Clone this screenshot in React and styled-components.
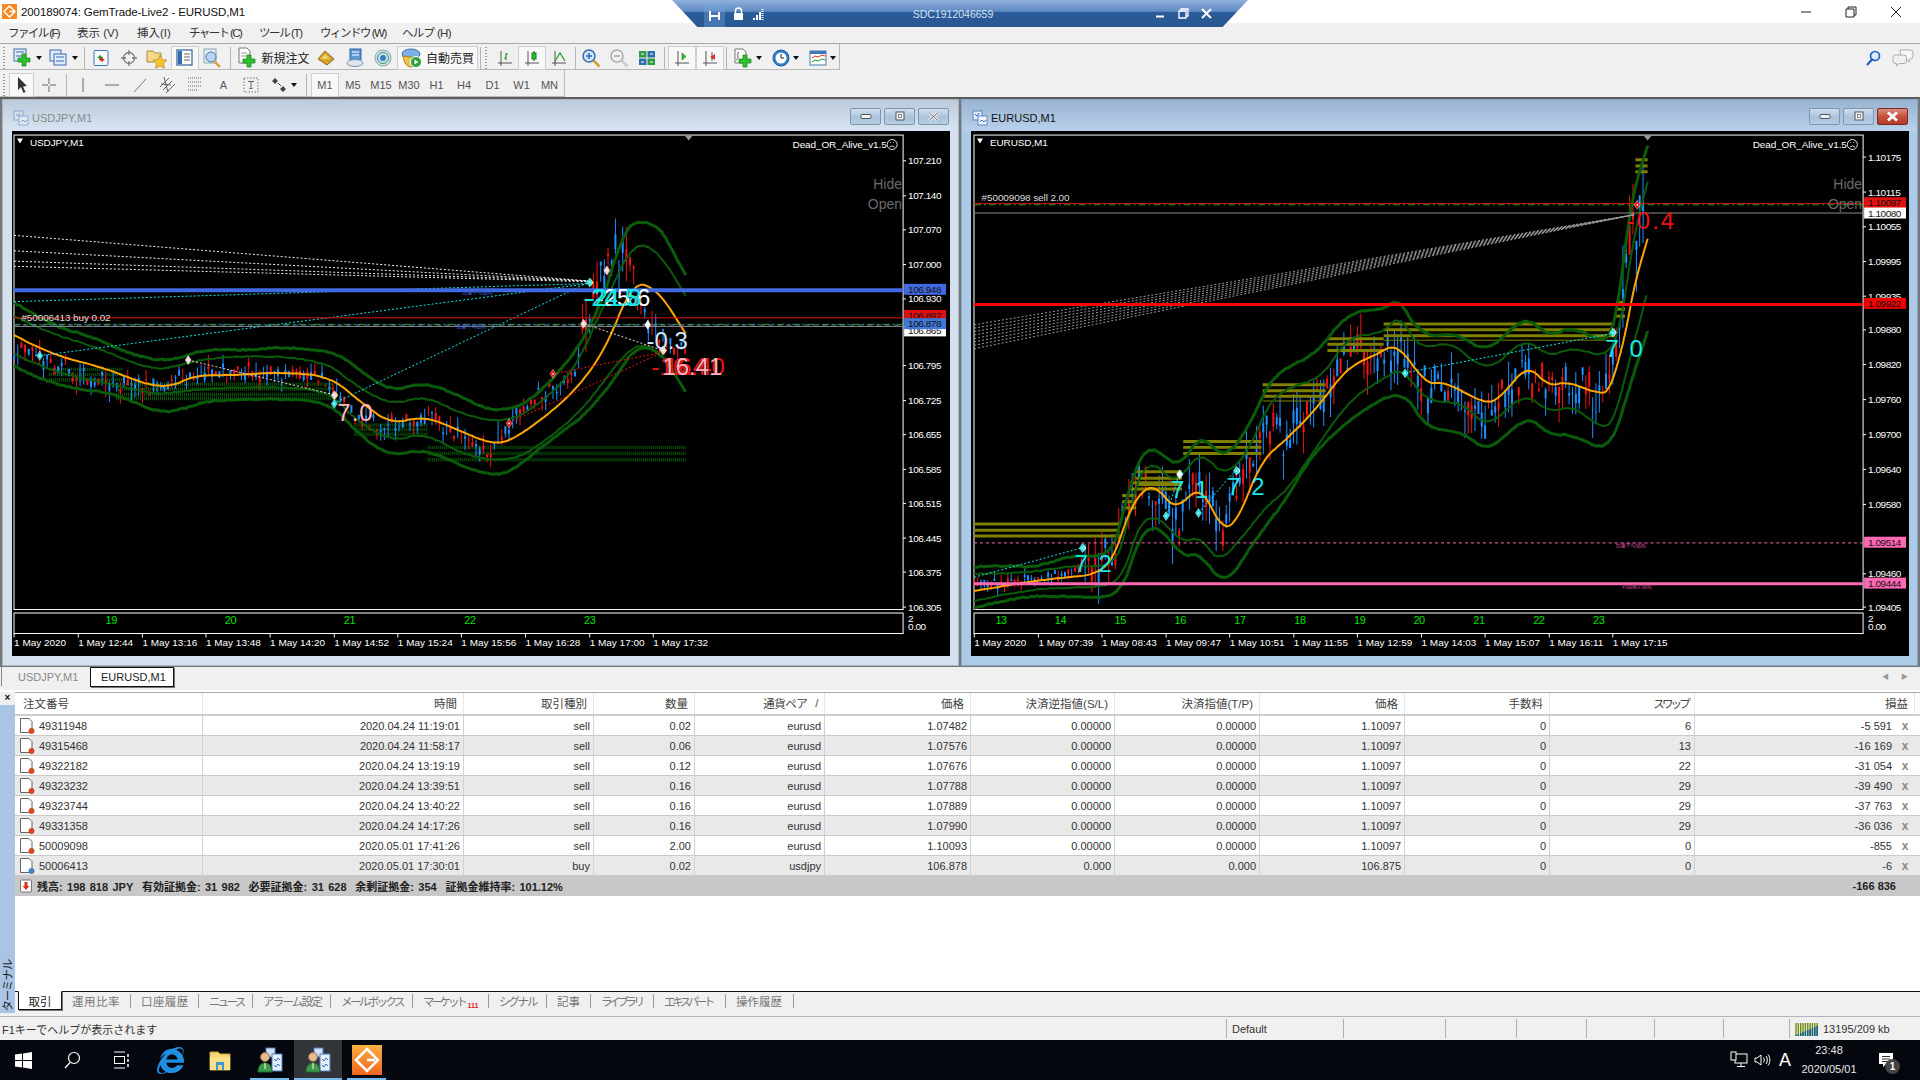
import React from 'react';
import styled, { createGlobalStyle, css } from 'styled-components';
import { FaInternetExplorer } from 'react-icons/fa';

const SANS = '"Liberation Sans","Noto Sans CJK JP",sans-serif';

const Global = createGlobalStyle`
  html, body { margin: 0; padding: 0; background: #f0f0f0; }
  body { font-family: ${SANS}; }
  * { box-sizing: border-box; }
`;

const Page = styled.div`
  position: relative; width: 1920px; height: 1080px; overflow: hidden;
  display: flex; flex-direction: column; background: #f0f0f0; color: #222; font-size: 12px;
`;

/* ---------- title bar ---------- */
const TitleBar = styled.div`
  height: 23px; flex: none; background: #fff; display: flex; align-items: center;
  justify-content: space-between; padding-left: 2px;
`;
const TitleLeft = styled.div`display: flex; align-items: center; gap: 4px; font-size: 11.5px; letter-spacing: -.1px; color: #111;`;
const WinCtrls = styled.div`display: flex; margin-right: 2px;`;
const WinCtrl = styled.div`width: 45px; height: 21px; display: flex; align-items: center; justify-content: center;`;

const ConnBar = styled.div`
  position: absolute; left: 672px; top: 0; width: 576px; height: 27px; color: #e8eef6;
  background: linear-gradient(#8fb0dc 0%, #5f8bc2 42%, #2b5c9c 46%, #28588f 100%);
  clip-path: polygon(0 0, 100% 0, 95.6% 100%, 4.4% 100%);
  display: flex; align-items: center; padding: 0 36px 0 32px; justify-content: space-between;
`;
const ConnGroup = styled.div`display: flex; align-items: center; gap: ${p => p.$gap || 4}px;`;
const ConnPin = styled.div`
  width: 21px; height: 22px; margin-top: 4px; background: rgba(120,170,225,.35); display: flex; align-items: center; justify-content: center;
`;
const ConnName = styled.div`font-size: 10.5px; color: #d5e0ee; margin-left: -14px;`;

/* ---------- menu ---------- */
const MenuBar = styled.div`
  height: 21px; flex: none; display: flex; align-items: center; padding: 0 0 3px 8px;
  background: #f0f0f0; border-bottom: 1px solid #a8a8a8; font-size: 11.5px; color: #333;
`;
const MenuItem = styled.div`width: ${p => p.$w}px; white-space: nowrap; letter-spacing: ${p => p.$ls || 0}px;`;

/* ---------- toolbars ---------- */
const ToolRow = styled.div`
  height: ${p => p.$h}px; flex: none; display: flex; align-items: stretch; justify-content: space-between;
  padding-right: 6px;
`;
const ToolBox = styled.div`
  display: flex; width: ${p => p.$w}px; align-items: center; padding-top: ${p => p.$pt}px;
  border-right: 1px solid #b8b8b8; border-bottom: 1px solid #b8b8b8;
`;
const Slot = styled.div`
  width: ${p => p.$w}px; height: 24px; flex: none; display: flex; align-items: center; justify-content: center; gap: 3px;
  font-size: 11px; color: #555; white-space: nowrap;
  ${p => p.$on && css`background: #f8f8f8; outline: 1px solid #cfcfcf; outline-offset: -1px;`}
  ${p => p.$black && css`color: #222; font-size: 12px;`}
`;
const Grip = styled.div`
  width: 8px; height: 22px; flex: none; margin-left: 1px;
  background: repeating-linear-gradient(#9a9a9a 0 1px, transparent 1px 3px) 2px 0 / 2px 100% no-repeat;
`;
const Sep = styled.div`
  width: ${p => p.$w}px; height: 22px; flex: none; position: relative;
  background: linear-gradient(#b4b4b4, #b4b4b4) center / 1px 100% no-repeat;
`;
const Drop = styled.span`width: 0; height: 0; border: 3px solid transparent; border-top: 4px solid #111; border-bottom: 0;`;
const RightTools = styled.div`display: flex; align-items: center; gap: 10px; padding-top: 2px;`;

/* ---------- MDI ---------- */
const Mdi = styled.div`
  height: 570px; flex: none; display: flex; border-top: 2px solid #5d5d5d; background: #777; gap: 2px; padding: 0 2px 1px 2px;
`;
const Win = styled.div`
  flex: 1; display: flex; flex-direction: column; min-width: 0;
  background: ${p => p.$active ? '#abcbe6' : '#d4e0ee'}; border: 1px solid ${p => p.$active ? '#87a7c6' : '#aab6c2'};
  padding: 0 8px 9px 9px;
`;
const WinHead = styled.div`
  height: 31px; flex: none; margin: 0 -8px 0 -9px; padding: 4px 9px 0 10px; display: flex; align-items: center; justify-content: space-between;
  background: ${p => p.$active ? 'linear-gradient(#99b4d1,#b9d1ea)' : 'linear-gradient(#bccbdb,#d7e4f2)'};
  color: ${p => p.$active ? '#111' : '#8b8b8b'}; font-size: 11px;
`;
const WinName = styled.div`display: flex; align-items: center; gap: 3px;`;
const WinBtns = styled.div`display: flex; gap: 3px; margin-bottom: 3px;`;
const WinBtn = styled.div`
  width: 31px; height: 17px; border-radius: 2px; display: flex; align-items: center; justify-content: center;
  border: 1px solid ${p => p.$close ? '#7d2a22' : '#7f96ad'};
  background: ${p => p.$close ? 'linear-gradient(#d98d7f 0%,#c7503c 50%,#b23b28 100%)' : 'linear-gradient(#cfdfee 0%,#a9c2db 55%,#b7cee4 100%)'};
`;
const BlackArea = styled.div`flex: 1; background: #000; min-height: 0; display: flex;`;
const ChartSvg = styled.svg`display: block; width: 940px; height: 524px;`;

const PriceT = styled.text`font: 10px ${SANS}; letter-spacing: -.45px; fill: ${p => p.$fill || '#fff'};`;
const TimeT = styled.text`font: 10px ${SANS}; fill: #fff;`;
const DayT = styled.text`font: 11px ${SANS}; fill: #00e000; letter-spacing: -.4px;`;
const SmallT = styled.text`font: 10px ${SANS}; letter-spacing: -.1px; fill: ${p => p.$fill || '#fff'};`;
const SideT = styled.text`font: 14px ${SANS}; fill: #6a6a6a; text-anchor: end;`;
const BigT = styled.text`font: 24px ${SANS}; fill: ${p => p.$fill}; letter-spacing: ${p => p.$ls || 0}px;`;
const TinyT = styled.text`font: 5px "Noto Sans CJK JP",sans-serif; fill: ${p => p.$fill};`;

/* ---------- chart tabs ---------- */
const ChartTabs = styled.div`
  height: 25px; flex: none; display: flex; align-items: flex-start; justify-content: space-between; padding-left: 1px;
  background: #f0f0f0; border-bottom: 2px solid #fff;
`;
const TabGroup = styled.div`display: flex; align-items: flex-start;`;
const ChartTab = styled.div`
  height: ${p => p.$on ? 20 : 19}px; width: ${p => p.$w}px; display: flex; align-items: center; padding-left: ${p => p.$on ? 10 : 16}px; font-size: 11px;
  ${p => p.$on ? css`background: #fff; color: #222; border: 1px solid #111; box-shadow: 1px 1px 0 #777;` : css`color: #8a8a8a; border-left: 1px solid #888;`}
`;
const Arrows = styled.div`display: flex; gap: 12px; color: #999; font-size: 7px; margin: 4px 12px 0 0;`;

/* ---------- terminal ---------- */
const Terminal = styled.div`height: 321px; flex: none; display: flex; background: #fff;`;
const Strip = styled.div`width: 15px; flex: none; display: flex; flex-direction: column; background: #f0f0f0;`;
const StripClose = styled.div`height: 13px; font-size: 10px; font-weight: 700; text-align: center; line-height: 11px; color: #111;`;
const StripBody = styled.div`
  flex: 1; background: #a9c4e4; display: flex; align-items: flex-end; justify-content: center; padding-bottom: 2px;
`;
const StripText = styled.div`
  writing-mode: vertical-rl; text-orientation: sideways; transform: rotate(180deg); font-size: 11.5px; color: #222; line-height: 14px; letter-spacing: -1.2px;
`;
const TermBody = styled.div`flex: 1; display: flex; flex-direction: column; min-width: 0;`;
const COLS = '188px 261px 130px 101px 130px 146px 144px 145px 145px 145px 145px 220px';
const HeadRow = styled.div`
  display: grid; grid-template-columns: ${COLS}; height: 24px; border-top: 1px solid #a8a8a8; border-bottom: 2px solid #cfcfcf; background: #fff;
`;
const HeadCell = styled.div`
  display: flex; align-items: center; justify-content: ${p => p.$left ? 'flex-start' : 'flex-end'}; padding: 0 6px 2px 8px; font-size: 11.5px; color: #444;
  border-right: 1px solid #e9e9e9; white-space: nowrap; gap: 8px; letter-spacing: ${p => p.$ls || 0}px;
`;
const Row = styled.div`
  display: grid; grid-template-columns: ${COLS}; height: 20px; border-bottom: 1px solid #c9c9c9; background: ${p => p.$alt ? '#e9e9e9' : '#fff'};
`;
const Cell = styled.div`
  display: flex; align-items: center; justify-content: flex-end; padding-right: 3px; font-size: 11px; color: #333; border-right: 1px solid #d2d2d2; white-space: nowrap;
`;
const IdCell = styled(Cell)`justify-content: flex-start; padding: 0 0 0 4px; gap: 3px;`;
const ProfitCell = styled(Cell)`border-right: 0; padding-right: 5px; gap: 8px;`;
const CloseX = styled.span`width: 10px; font-size: 12px; color: #8a8a8a; font-weight: 700; text-align: center;`;
const TotalRow = styled.div`
  height: 20px; background: #c8c8c8; display: flex; align-items: center; justify-content: space-between; padding: 0 24px 0 4px;
  font-size: 11px; font-weight: 700; color: #222; white-space: nowrap;
`;
const TotalLeft = styled.div`display: flex; align-items: center; gap: 4px; word-spacing: 1.3px;`;
const Filler = styled.div`flex: 1;`;
const BottomTabs = styled.div`
  height: 22px; flex: none; display: flex; align-items: flex-start; border-top: 1px solid #111; background: #f0f0f0; padding-left: 3px; font-size: 11.5px; color: #777;
`;
const BottomTab = styled.div`
  width: ${p => p.$w}px; height: 19px; display: flex; align-items: center; white-space: nowrap; letter-spacing: ${p => p.$ls || 0}px;
  ${p => p.$on ? css`justify-content: center; background: #fff; color: #222; border: 1px solid #111; border-top-color: #fff; box-shadow: 1px 1px 0 #777; margin-top: -1px;`
    : css`padding-left: 10px; border-right: 1px solid #999; height: 14px; margin-top: 2px;`}
`;
const Market = styled.sup`font-size: 7px; color: #e02020; margin: 0 0 -9px 3px; line-height: 1; font-weight: 700; letter-spacing: 0;`;

const Gutter = styled.div`height: 4px; flex: none; background: #f0f0f0; border-bottom: 1px solid #b4b4b4;`;
const Status = styled.div`height: 23px; flex: none; display: flex; align-items: center; font-size: 11px; color: #333; background: #f0f0f0;`;
const StatusCell = styled.div`
  width: ${p => p.$w}px; height: 19px; flex: none; display: flex; align-items: center; gap: 4px; padding-left: ${p => p.$pl || 0}px; white-space: nowrap;
  ${p => !p.$first && css`border-left: 1px solid #b0b0b0;`}
`;

/* ---------- taskbar ---------- */
const Taskbar = styled.div`height: 40px; flex: none; display: flex; justify-content: space-between; background: #05070e;`;
const TaskLeft = styled.div`display: flex;`;
const TaskSlot = styled.div`
  width: ${p => p.$w || 49}px; height: 40px; position: relative; display: flex; align-items: center; justify-content: center; color: #fff;
  ${p => p.$active && css`background: #333437;`}
  ${p => p.$open && css`&::after { content: ''; position: absolute; left: ${p.$active ? 0 : 5}px; right: ${p.$active ? 0 : 5}px; bottom: 0; height: 2px; background: #76b9ed; }`}
`;
const Tray = styled.div`display: flex; align-items: center; color: #fff; padding-right: 20px;`;
const TrayIcon = styled.div`width: ${p => p.$w}px; display: flex; justify-content: center; font-size: ${p => p.$fs || 12}px;`;
const Clock = styled.div`width: 66px; text-align: center; font-size: 11px; line-height: 19px; color: #e8e8e8;`;
const Notif = styled.div`position: relative; width: 28px; margin-left: 10px; display: flex; justify-content: center;`;
const NotifBadge = styled.span`
  position: absolute; right: 0; bottom: -6px; width: 15px; height: 15px; border-radius: 50%; background: #444; color: #fff;
  font-size: 10px; font-weight: 700; text-align: center; line-height: 15px;
`;

/* ---------- icons ---------- */
const S = ({ s = 18, vb = '0 0 18 18', children }) => <svg width={s} height={s} viewBox={vb}>{children}</svg>;
const Plus = ({ x = 0, y = 0 }) => <path transform={`translate(${x} ${y})`} d="M9 7h4v4h4v4h-4v4H9v-4H5v-4h4z" fill="#2fc02f" stroke="#178017" strokeWidth=".7" />;
const Chartlet = ({ x = 1, y = 1, w = 11, h = 12 }) => <g><rect x={x} y={y} width={w} height={h} fill="#dfeafa" stroke="#3a6ea8" /><path d={`M${x + 2} ${y + 3}h${w - 4}M${x + 2} ${y + 7}h${w - 4}`} stroke="#3a6ea8" /></g>;
const Icons = {
  newChart: <S s={20} vb="0 0 20 20"><Chartlet w={12} h={12} /><Plus x={0} y={-1} /></S>,
  profile: <S s={20} vb="0 0 20 20"><rect x="1" y="2" width="11" height="11" fill="#dfeafa" stroke="#3a6ea8" /><rect x="5" y="6" width="12" height="11" fill="#dfeafa" stroke="#3a6ea8" /><path d="M7 9h8M7 13h8" stroke="#3a6ea8" /></S>,
  market: <S><rect x="2" y="1.500" width="14" height="15" rx="1" fill="#f5f9ff" stroke="#3a78b8" /><path d="M6 5l3 3H7v2H5V8H3z" transform="translate(2 1)" fill="#1f9e2f" /><path d="M10 13l-3-3h2V8h2v2h2z" fill="#d8331f" /></S>,
  nav: <S><circle cx="9" cy="9" r="5.500" fill="none" stroke="#777" strokeWidth="1.300" /><path d="M9 1v5M9 12v5M1 9h5M12 9h5" stroke="#777" strokeWidth="1.300" /></S>,
  fav: <S s={22} vb="0 0 22 22"><path d="M1 4h6l2 2h6v9H1z" fill="#f4d98a" stroke="#a88a3a" /><path d="M14 8l2.200 4.500 4.800.7-3.500 3.300.9 4.800-4.400-2.300-4.400 2.300.9-4.800L7 13.200l4.800-.7z" fill="#f5c62e" stroke="#b08a15" strokeWidth=".7" /></S>,
  term: <S s={20} vb="0 0 20 20"><rect x="2" y="2" width="15" height="15" fill="#fff" stroke="#2d5f96" strokeWidth="1.200" /><rect x="3" y="3" width="4" height="13" fill="#2f6cb0" /><path d="M9 6h6M9 9h6M9 12h6" stroke="#666" /></S>,
  strat: <S s={20} vb="0 0 20 20"><rect x="2" y="1" width="12" height="14" fill="#e4ecf6" stroke="#8aa" /><circle cx="9" cy="9" r="5" fill="#b8d4f2" stroke="#4477aa" /><path d="M12 13l6 6" stroke="#d8a030" strokeWidth="2.400" /></S>,
  order: <S s={22} vb="0 0 22 22"><path d="M3 1h8l3 3v12H3z" fill="#fff" stroke="#777" /><path d="M5 6h6M5 9h6" stroke="#999" /><Plus x={2} y={1} /></S>,
  gold: <S s={20} vb="0 0 20 20"><path d="M2 11l7-8 9 8-7 6z" fill="#d8a228" stroke="#8a6a1a" /><path d="M5 11l4-5 5 5" fill="#f0cf70" /></S>,
  cloud: <S s={20} vb="0 0 20 20"><rect x="5" y="1" width="11" height="11" fill="#5c98d8" stroke="#2f669f" /><path d="M7 4h7M7 7h7" stroke="#fff" /><ellipse cx="10" cy="15" rx="8" ry="3.500" fill="#dde6ef" stroke="#7d93a8" /></S>,
  signal: <S s={20} vb="0 0 20 20"><circle cx="10" cy="10" r="8" fill="#cde0e8" stroke="#88a8b8" /><circle cx="10" cy="10" r="5.500" fill="none" stroke="#3d9a6a" /><circle cx="10" cy="10" r="3" fill="#3d7ac8" /></S>,
  auto: <S s={22} vb="0 0 22 22"><ellipse cx="10" cy="7" rx="9" ry="5" fill="#7ab2e8" stroke="#3f6fa0" /><path d="M2 9c1 7 4 11 8 11s6-4 7-9z" fill="#f0c24a" stroke="#a37e18" /><circle cx="15" cy="15" r="5.500" fill="#27a33a" stroke="#fff" /><path d="M13.500 12.500l4 2.500-4 2.500z" fill="#fff" /></S>,
  ctBar: <S><path d="M5 2v12h11" fill="none" stroke="#555" /><path d="M2 14h3M5 14v3" stroke="#555" /><path d="M10 4v7M10 5h2M8 9h2" stroke="#1f9e2f" strokeWidth="1.200" /></S>,
  ctCandle: <S><path d="M5 2v12h11M2 14h3M5 14v3" fill="none" stroke="#555" /><path d="M11 2v10" stroke="#333" /><rect x="9" y="4" width="4" height="6" fill="#2fc02f" stroke="#1a7a1a" /></S>,
  ctLine: <S><path d="M5 2v12h11M2 14h3M5 14v3" fill="none" stroke="#555" /><path d="M5 12l5-8 5 8" fill="none" stroke="#1f9e2f" strokeWidth="1.200" /></S>,
  zin: <S s={20} vb="0 0 20 20"><circle cx="8" cy="8" r="6" fill="#cfe4fb" stroke="#2f6cb0" strokeWidth="1.500" /><path d="M5 8h6M8 5v6" stroke="#2f6cb0" strokeWidth="1.600" /><path d="M12.500 12.500l6 6" stroke="#d8a030" strokeWidth="2.600" /></S>,
  zout: <S s={20} vb="0 0 20 20"><circle cx="8" cy="8" r="6" fill="#f2f2f2" stroke="#aaa" strokeWidth="1.500" /><path d="M5 8h6" stroke="#aaa" strokeWidth="1.600" /><path d="M12.500 12.500l6 6" stroke="#ccc" strokeWidth="2.600" /></S>,
  tile: <S><rect x="1" y="2" width="7.500" height="6.500" fill="#2f9a40" /><rect x="9.500" y="2" width="7.500" height="6.500" fill="#2f6cb0" /><rect x="1" y="9.500" width="7.500" height="6.500" fill="#2f6cb0" /><rect x="9.500" y="9.500" width="7.500" height="6.500" fill="#2f9a40" /><path d="M3 5h3M12 5h3M3 13h3M12 13h3" stroke="#fff" /></S>,
  scroll: <S><path d="M5 2v12h11M2 14h3M5 14v3" fill="none" stroke="#555" /><path d="M9 4l4 3.500-4 3.500z" fill="#2fc02f" stroke="#1a7a1a" strokeWidth=".6" /></S>,
  shift: <S><path d="M5 2v12h11M2 14h3M5 14v3M11 3v9" fill="none" stroke="#555" /><path d="M14 5l-5 3 5 3z" fill="#d8331f" /></S>,
  ind: <S s={20} vb="0 0 20 20"><path d="M2 1h8l3 3v11H2z" fill="#fff" stroke="#777" /><path d="M6 4c-2 0-1 3-1 5s-1 3-2 3" fill="none" stroke="#555" /><Plus x={1} y={0} /></S>,
  clock: <S><circle cx="9" cy="9" r="8" fill="#2f80d0" stroke="#1f5a98" /><circle cx="9" cy="9" r="5.500" fill="#fff" /><path d="M9 5v4h3" stroke="#222" fill="none" /></S>,
  tmpl: <S><rect x="1" y="2" width="16" height="14" fill="#fff" stroke="#4a7aa8" /><rect x="1" y="2" width="16" height="3" fill="#3f78b8" /><path d="M3 9l3-2 3 1 4-2 3 1" stroke="#d8331f" fill="none" /><path d="M3 13l3-2 3 1 4-2 3 1" stroke="#1f9e2f" fill="none" /></S>,
  cursor: <S><path d="M5 1l9 9-4 .4 2.500 5.600-2 .9L8 11l-3 3z" fill="#333" /></S>,
  cross: <S><path d="M9 2v6M9 10v6M2 9h6M10 9h6" stroke="#666" /></S>,
  vline: <S><path d="M9 2v14" stroke="#666" /></S>,
  hline: <S><path d="M2 9h14" stroke="#666" /></S>,
  trend: <S><path d="M3 16L15 3" stroke="#777" /></S>,
  chan: <S s={20} vb="0 0 20 20"><path d="M2 12l9-9M5 15l9-9M8 18l9-9M6 2l4 15M3 9l10 1" stroke="#666" fill="none" /></S>,
  fib: <S s={20} vb="0 0 20 20"><path d="M2 3h14M2 7h14M2 11h14M2 15h10" stroke="#666" strokeDasharray="1 1" /></S>,
  txtbox: <S><rect x="2" y="2" width="14" height="14" fill="none" stroke="#777" strokeDasharray="1.500 1.500" /><path d="M6 5.500h6M9 5.500v7M7.500 12.500h3" stroke="#666" fill="none" /></S>,
  arrows: <S><path d="M5 2l3 3-3 3-3-3zM13 10l3 3-3 3-3-3z" fill="#444" /><path d="M8 7l3 3" stroke="#444" /></S>,
  pin: <S s={14} vb="0 0 14 14"><path d="M1 7h11M2 2v10M11 3v8" stroke="#fff" strokeWidth="2" /></S>,
  lock: <S s={13} vb="0 0 13 13"><path d="M3.500 6V4a3 3 0 0 1 6 0v2" fill="none" stroke="#fff" strokeWidth="1.500" /><rect x="2" y="6" width="9" height="7" fill="#fff" /></S>,
  bars: <S s={13} vb="0 0 13 13"><path d="M1 13v-2h2v2zM4 13V8h2v5zM7 13V5h2v8z" fill="#fff" /><path d="M10.500 13V1" stroke="#fff" strokeDasharray="1 1" strokeWidth="2" /></S>,
  search: <S s={18} vb="0 0 18 18"><circle cx="11" cy="7" r="4.500" fill="#dbeafe" stroke="#1d5fc0" strokeWidth="1.700" /><path d="M8 10.500l-5 5.500" stroke="#1d5fc0" strokeWidth="2.200" /></S>,
  chat: <S s={22} vb="0 0 22 22"><path d="M8 3h10a3 3 0 0 1 3 3v3a3 3 0 0 1-3 3l-1 3-2-3H9z" fill="#f7f7f7" stroke="#aaa" /><path d="M3 8h9a2.500 2.500 0 0 1 2.500 2.500V14a2.500 2.500 0 0 1-2.500 2.500H7L4.500 19v-2.500H3A2.500 2.500 0 0 1 1 14v-3.500A2.500 2.500 0 0 1 3 8z" fill="#f0f0f0" stroke="#aaa" /></S>,
  winTab: <S s={16} vb="0 0 16 16"><rect x="1" y="1" width="9" height="9" fill="#dfeafa" stroke="#5a8ac8" /><rect x="6" y="6" width="9" height="9" fill="#eef4fc" stroke="#5a8ac8" /><path d="M3 4l2 2 2-3M8 12l2-2 2 2 2-2" stroke="#3a6ea8" fill="none" /></S>,
  winTabDim: <S s={16} vb="0 0 16 16"><g opacity=".55"><rect x="1" y="1" width="9" height="9" fill="#dfeafa" stroke="#5a8ac8" /><rect x="6" y="6" width="9" height="9" fill="#eef4fc" stroke="#5a8ac8" /><path d="M3 4l2 2 2-3M8 12l2-2 2 2 2-2" stroke="#3a6ea8" fill="none" /></g></S>,
  start: <S s={17} vb="0 0 17 17"><path d="M0 2.500l7-1v6.500H0zM8 1.400L17 0v8H8zM0 9h7v6.500l-7-1zM8 9h9v8l-9-1.400z" fill="#fff" /></S>,
  lens: <S s={20} vb="0 0 20 20"><circle cx="12" cy="8" r="5.500" fill="none" stroke="#fff" strokeWidth="1.200" /><path d="M8 12.500L3 18" stroke="#fff" strokeWidth="1.200" /></S>,
  taskv: <S s={18} vb="0 0 18 18"><path d="M2 1h11M2 17h11" stroke="#fff" /><rect x="2.500" y="5.500" width="10" height="7" fill="none" stroke="#fff" /><path d="M16 3v3M16 8v3M16 13v3" stroke="#fff" strokeWidth="1.500" /></S>,
  folder: <S s={26} vb="0 0 26 26"><path d="M3 5h8l2 2h10v16H3z" fill="#f7d774" stroke="#c8a43a" /><rect x="3" y="10" width="20" height="13" fill="#fbe08a" /><rect x="9" y="15" width="8" height="8" fill="#3a9ad8" /><rect x="11" y="18" width="4" height="5" fill="#f7d774" /></S>,
  mt: <S s={28} vb="0 0 28 28"><rect x="10" y="2" width="9" height="9" fill="#cfe0f6" stroke="#4a7fc0" /><rect x="16" y="8" width="10" height="17" fill="#e4eefb" stroke="#4a7fc0" /><path d="M18 13l2 2 2-3 2 2M18 19l2 2 2-3 2 2" stroke="#3a6ea8" fill="none" /><circle cx="9" cy="11" r="4.500" fill="#e9b98e" stroke="#8a6a4a" /><path d="M2 26c0-6 3-9 7-9s7 3 7 9z" fill="#3f9a4a" stroke="#1f6a2a" /><path d="M9 17v6" stroke="#fff" /></S>,
  gem: <S s={30} vb="0 0 30 30"><defs><linearGradient id="gmg" x1="0" y1="0" x2="0" y2="1"><stop offset="0" stopColor="#fbb040" /><stop offset="1" stopColor="#f26522" /></linearGradient></defs><rect width="30" height="30" fill="url(#gmg)" /><path d="M15 4L26 15 15 26 4 15zM15 15h8" fill="none" stroke="#fff" strokeWidth="2.500" /></S>,
  gemSmall: <S s={15} vb="0 0 30 30"><rect width="30" height="30" fill="#f58a25" /><path d="M15 4L26 15 15 26 4 15zM15 15h8" fill="none" stroke="#fff" strokeWidth="3" /></S>,
  net: <S s={18} vb="0 0 18 18"><rect x="5" y="3" width="12" height="9" fill="none" stroke="#fff" /><path d="M11 12v3M7 15.500h8" stroke="#fff" /><rect x="1" y="1" width="5" height="8" fill="#05070e" stroke="#fff" /></S>,
  vol: <S s={18} vb="0 0 18 18"><path d="M2 7h2l4-3v10l-4-3H2z" fill="none" stroke="#fff" /><path d="M10.500 6.500c1 1.500 1 3.500 0 5M13 5c1.800 2.500 1.800 5.500 0 8M15 3.500c2.500 3.500 2.500 7.500 0 11" fill="none" stroke="#fff" /></S>,
  notify: <S s={16} vb="0 0 16 16"><path d="M1 1h14v11H8l-3 3v-3H1z" fill="#fff" /><path d="M4 4.500h8M4 7h8M4 9.500h6" stroke="#333" /></S>,
  doc: c => <S s={17} vb="0 0 17 17"><path d="M1.500 1.500h8.500l3 3v11h-11.500z" fill="#fff" stroke="#666" /><circle cx="12.500" cy="14" r="2.700" fill={c} stroke="#7a3a20" strokeWidth=".4" /></S>,
  sumDoc: <S s={14} vb="0 0 14 14"><rect x="1.500" y="1" width="11" height="12" rx="1" fill="#fff" stroke="#777" /><path d="M5.500 3h3v4h2L7 11 3.500 7h2z" fill="#d8331f" /></S>,
  meter: <S s={24} vb="0 0 24 14"><g strokeWidth="1.400">{[...Array(10)].map((_, i) => <g key={i}><path d={`M${1 + i * 2.350} 1v${13}`} stroke="#6f8a10" /><path d={`M${1 + i * 2.350} ${13 - i}v${1 + i}`} stroke="#0a5a88" /></g>)}</g></S>,
};

/* ---------- chart data ---------- */
const L = ([x, y]) => [x / 1.633 + 0, y / 2.904 + 130];
const R = ([x, y]) => [960 + x / 1.633, y / 2.904 + 130];
const quadSamples = (pts, m) => {
  const p = pts.map(m), out = [p[0]];
  let prev = p[0];
  for (let i = 1; i < p.length - 1; i++) {
    const e = [(p[i][0] + p[i + 1][0]) / 2, (p[i][1] + p[i + 1][1]) / 2];
    const n = Math.max(2, Math.ceil(Math.hypot(e[0] - prev[0], e[1] - prev[1]) / 3));
    for (let k = 1; k <= n; k++) {
      const t = k / n, u = 1 - t;
      out.push([u * u * prev[0] + 2 * u * t * p[i][0] + t * t * e[0], u * u * prev[1] + 2 * u * t * p[i][1] + t * t * e[1]]);
    }
    prev = e;
  }
  out.push(p[p.length - 1]);
  return out;
};
const rng = seed => () => { seed = (seed * 48271) % 2147483647; return seed / 2147483647; };
const wobbly = (pts, m, seed, amp) => {
  const r = rng(seed);
  for (let i = 0; i < 5; i++) r();
  return quadSamples(pts, m).map(([x, y]) => `${x.toFixed(1)},${(y + (r() - .5) * amp).toFixed(1)}`).join(' ');
};
const lerp = (pts, x) => {
  for (let i = 0; i < pts.length - 1; i++) if (x <= pts[i + 1][0]) {
    const t = (x - pts[i][0]) / (pts[i + 1][0] - pts[i][0]);
    return pts[i][1] + t * (pts[i + 1][1] - pts[i][1]);
  }
  return pts[pts.length - 1][1];
};

const candles = (price, x0, x1, step, amp, seed, regionAmp) => {
  const r = rng(seed), out = [];
  for (let i = 0; i < 9; i++) r();
  for (let x = x0; x < x1; x += step) {
    const a = regionAmp ? regionAmp(x, amp) : amp;
    const c = lerp(price, x) + (r() - .5) * a * 1.2;
    const up = r() * a, dn = r() * a;
    const body = r() * a * .6;
    const col = r() > .45 ? '#1e90ff' : '#f01414';
    out.push({ x, y1: c - up, y2: c + dn, b1: c - body / 2, b2: c + body / 2, col });
  }
  return out;
};

const leftChart = {
  id: 'USDJPY,M1', map: L, vb: '12 131 940 524', mark: 1127, frame: [14, 905], signature: 1297,
  bandsThick: [
    [[23, 500], [60, 540], [100, 575], [150, 600], [200, 640], [250, 668], [290, 665], [340, 635], [400, 640], [460, 630], [510, 638], [555, 650], [590, 700], [640, 760], [695, 732], [750, 770], [800, 815], [840, 810], [880, 770], [945, 640], [985, 500], [1010, 350], [1035, 257], [1080, 280], [1100, 350], [1122, 420]],
    [[23, 685], [80, 740], [190, 765], [260, 825], [310, 805], [340, 785], [460, 780], [540, 790], [590, 890], [640, 948], [695, 925], [780, 995], [830, 1005], [900, 900], [950, 840], [1000, 740], [1040, 625], [1080, 640], [1122, 760]],
  ],
  bandsThin: [
    [[23, 540], [80, 590], [150, 625], [250, 700], [300, 680], [350, 660], [460, 655], [540, 680], [580, 740], [640, 800], [695, 770], [760, 830], [830, 850], [880, 800], [940, 700], [990, 500], [1035, 327], [1075, 345], [1122, 480]],
    [[23, 650], [80, 700], [200, 745], [260, 770], [330, 750], [460, 745], [540, 760], [580, 840], [640, 905], [695, 880], [760, 945], [830, 965], [880, 920], [950, 820], [1000, 700], [1040, 620], [1075, 635], [1100, 700]],
  ],
  orange: [[23, 595], [80, 650], [170, 690], [240, 740], [280, 745], [320, 712], [380, 712], [460, 703], [540, 715], [590, 790], [640, 855], [695, 830], [760, 880], [800, 908], [830, 908], [880, 850], [940, 760], [990, 640], [1035, 440], [1075, 460], [1122, 590]],
  price: [[23, 640], [80, 680], [170, 720], [240, 750], [280, 730], [320, 712], [400, 700], [460, 705], [540, 730], [590, 850], [640, 860], [695, 830], [760, 900], [800, 935], [830, 860], [880, 770], [940, 720], [955, 560], [1000, 360], [1030, 370], [1040, 470], [1060, 570], [1085, 600], [1122, 640]],
  cArgs: [23, 1122, 6, 45, 123456789, x => x > 950 && x < 1040 ? 85 : x < 250 ? 45 : 38],
  lines: [
    { y: 465, c: '#4169e1', w: 4 }, { y: 545, c: '#e01010', w: 1 }, { y: 564, c: '#22a022', w: 1, dash: '7 3 2 3' }, { y: 566, c: '#5a78c8', w: 1, dash: '5 4' }, { y: 570, c: '#8a8a8a', w: 1 },
  ],
  dotted: [
    [[23, 305], [965, 438], '#f4f4f4'], [[23, 350], [965, 438], '#f4f4f4'], [[23, 380], [965, 438], '#f4f4f4'], [[23, 395], [965, 440], '#f4f4f4'],
    [[23, 498], [965, 445], '#19e6e6'], [[65, 655], [965, 445], '#19e6e6'], [[545, 795], [965, 440], '#19e6e6'],
    [[308, 668], [545, 768], '#f4d0d8'], [[955, 562], [1085, 640], '#f4d0d8'],
    [[833, 850], [1085, 645], '#e81414'], [[905, 708], [1085, 645], '#e81414'],
  ],
  hatch: [[80, 200, [695, 710, 725]], [190, 545, [738, 752, 768, 780]], [580, 700, [857, 870, 884]], [700, 1122, [922, 940, 958]]],
  gold: [],
  markers: [[65, 655, '#19e6e6'], [308, 668, '#f4d0d8'], [547, 770, '#f4d0d8', '#ffe000'], [547, 795, '#19e6e6'], [833, 852, '#e81414'], [905, 708, '#e81414'], [955, 562, '#f4d0d8'], [965, 442, '#19e6e6', '#ffe000'], [993, 407, '#f4d0d8'], [1060, 565, '#fff'], [1085, 640, '#f4d0d8', '#ffe000']],
  prices: [['107.210', 88], ['107.140', 190], ['107.070', 289], ['107.000', 390], ['106.930', 490], ['106.795', 684], ['106.725', 786], ['106.655', 885], ['106.585', 986], ['106.515', 1085], ['106.445', 1186], ['106.375', 1285], ['106.305', 1387]],
  tags: [['106.865', 583, '#fff', '#111'], ['106.948', 462, '#4169e1', '#111'], ['106.897', 538, '#e01010', '#111'], ['106.878', 562, '#3f78d8', '#111']],
  days: [['19', 182], ['20', 377], ['21', 572], ['22', 769], ['23', 965]],
  times: [['1 May 2020', 23], ['1 May 12:44', 128], ['1 May 13:16', 233], ['1 May 13:48', 337], ['1 May 14:20', 442], ['1 May 14:52', 547], ['1 May 15:24', 651], ['1 May 15:56', 755], ['1 May 16:28', 860], ['1 May 17:00', 965], ['1 May 17:32', 1069]],
  note: ['#50006413 buy 0.02', 35, 553],
  big: [
    ['7.0', 552, 845, '#ffb6c1', 1], ['-25.6', 975, 512, '#fff'], ['-24.5', 955, 512, '#19e6e6'], ['-21.8', 960, 512, '#19e6e6'], ['-0.3', 1058, 635, '#cfe8ff'],
    ['-16.4', 1066, 712, '#e81414'], ['16.40', 1088, 712, '#e81414'], ['16.41', 1084, 712, '#ffb6c1'],
  ],
  tiny: [['加重平均価格', 757, 477, '#3a5ac8'], ['加重平均価格', 747, 575, '#3a5ac8']],
  sideX: 1476,
};

const rightChart = {
  id: 'EURUSD,M1', map: R, vb: '969 131 940 524', mark: 1122, frame: [972, 1863], signature: 1294,
  bandsThick: [
    [[20, 1270], [60, 1265], [120, 1272], [180, 1235], [245, 1240], [265, 1100], [290, 950], [315, 920], [355, 985], [390, 880], [430, 960], [470, 860], [500, 740], [530, 690], [580, 650], [630, 530], [690, 520], [715, 488], [740, 570], [770, 600], [810, 590], [860, 650], [920, 535], [960, 600], [1000, 570], [1050, 620], [1070, 560], [1095, 200], [1122, 45]],
    [[20, 1390], [100, 1350], [200, 1360], [260, 1355], [290, 1180], [320, 1145], [360, 1240], [390, 1230], [430, 1330], [480, 1190], [530, 1075], [570, 950], [630, 845], [720, 745], [760, 870], [820, 875], [860, 940], [925, 825], [960, 885], [1000, 885], [1060, 940], [1095, 730], [1122, 585]],
  ],
  bandsThin: [
    [[20, 1290], [100, 1290], [180, 1265], [250, 1270], [270, 1150], [290, 1000], [315, 965], [350, 1030], [390, 930], [430, 1010], [470, 930], [500, 800], [530, 750], [590, 720], [630, 600], [690, 590], [715, 535], [750, 640], [800, 610], [860, 710], [920, 600], [960, 660], [1000, 630], [1050, 660], [1075, 600], [1100, 300], [1122, 150]],
    [[20, 1370], [100, 1335], [200, 1330], [260, 1320], [290, 1140], [320, 1120], [360, 1200], [390, 1180], [420, 1260], [460, 1180], [500, 1090], [530, 1050], [570, 950], [630, 790], [690, 720], [720, 690], [760, 790], [820, 790], [860, 870], [920, 760], [960, 820], [1000, 800], [1040, 860], [1065, 860], [1095, 650], [1120, 480]],
  ],
  orange: [[20, 1340], [100, 1315], [170, 1300], [210, 1295], [245, 1260], [275, 1100], [300, 1040], [320, 1040], [350, 1105], [390, 1030], [425, 1160], [450, 1140], [490, 960], [530, 900], [580, 810], [630, 690], [680, 650], [712, 618], [760, 740], [790, 730], [855, 795], [880, 780], [925, 680], [960, 745], [990, 730], [1040, 765], [1060, 760], [1085, 600], [1100, 450], [1122, 315]],
  price: [[20, 1320], [100, 1310], [170, 1290], [210, 1260], [245, 1240], [275, 1050], [300, 1030], [320, 1060], [350, 1150], [390, 1020], [425, 1180], [450, 1060], [490, 880], [530, 900], [580, 780], [630, 670], [680, 640], [712, 640], [760, 750], [790, 740], [855, 830], [880, 760], [925, 700], [960, 740], [990, 730], [1040, 770], [1060, 700], [1085, 480], [1100, 250], [1115, 270]],
  cArgs: [20, 1116, 5.5, 85, 987654321, (x, a) => x < 200 ? 25 : x > 1080 ? 150 : a],
  lines: [
    { y: 212, c: '#e01010', w: 1 }, { y: 216, c: '#22a022', w: 1, dash: '7 3 2 3' }, { y: 240, c: '#8a8a8a', w: 1 }, { y: 506, c: '#ff0000', w: 3 },
    { y: 1200, c: '#ff69b4', w: 1, dash: '3 3' }, { y: 1319, c: '#ff69b4', w: 3 },
  ],
  dotted: [
    ...[565, 575, 585, 595, 605, 615, 625, 635].map(y => [[20, y], [1100, 245], '#9a9a9a']),
    [[725, 705], [1065, 590], '#19e6e6'], [[20, 1300], [195, 1215], '#19e6e6'], [[335, 1120], [355, 1000], '#19e6e6'], [[387, 1113], [447, 990], '#19e6e6'],
  ],
  hatch: [],
  gold: [[20, 258, [1145, 1163, 1180]], [262, 285, [1062, 1080, 1098]], [275, 360, [1025, 1043]], [285, 360, [993, 1012, 1030]], [362, 490, [905, 922, 940]], [492, 595, [740, 757, 773, 787]], [598, 690, [606, 622, 640]], [690, 1068, [563, 580, 597, 610]], [1070, 1085, [500, 520, 540]], [1102, 1122, [85, 103, 120]]],
  markers: [[197, 1215, '#19e6e6', '#fff'], [334, 1122, '#19e6e6'], [356, 1000, '#fff', '#19e6e6'], [387, 1113, '#19e6e6'], [449, 990, '#19e6e6', '#fff'], [725, 706, '#19e6e6'], [1065, 588, '#19e6e6', '#fff'], [1105, 216, '#e81414']],
  prices: [['1.10175', 77], ['1.10115', 179], ['1.10055', 280], ['1.09995', 381], ['1.09935', 482], ['1.09880', 580], ['1.09820', 681], ['1.09760', 783], ['1.09700', 885], ['1.09640', 986], ['1.09580', 1088], ['1.09460', 1290], ['1.09405', 1387]],
  tags: [['1.10097', 210, '#e01010', '#111'], ['1.10080', 240, '#fff', '#111'], ['1.09922', 503, '#f00000', '#111'], ['1.09514', 1198, '#ff69b4', '#111'], ['1.09444', 1317, '#ff69b4', '#111']],
  days: ['13', '14', '15', '16', '17', '18', '19', '20', '21', '22', '23'].map((d, i) => [d, [64, 161, 259, 357, 455, 553, 651, 748, 846, 944, 1042][i]]),
  times: [['1 May 2020', 20], ['1 May 07:39', 125], ['1 May 08:43', 229], ['1 May 09:47', 334], ['1 May 10:51', 438], ['1 May 11:55', 543], ['1 May 12:59', 647], ['1 May 14:03', 752], ['1 May 15:07', 856], ['1 May 16:11', 961], ['1 May 17:15', 1065]],
  note: ['#50009098 sell 2.00', 32, 204],
  big: [
    ['7 2', 184, 1285, '#19e6e6', 2], ['7 1', 342, 1068, '#19e6e6', 2], ['7 2', 434, 1062, '#19e6e6', 2], ['7 0', 1053, 658, '#19e6e6', 2], ['-0.4', 1088, 287, '#e81414', 2],
  ],
  tiny: [['加重平均価格', 1070, 1212, '#c04a90'], ['利益確定価格', 1080, 1332, '#c04a90']],
  sideX: 1473,
};

const Marker = ({ p, c, c2 }) => {
  const [x, y] = p;
  return <g>
    {c2 && <path d={`M${x + 1} ${y - 4}l3 4-3 4z`} fill={c2} />}
    <path d={`M${x} ${y - 4.500}l3 4.500-3 4.500-3-4.500z`} fill={c} stroke="#fff" strokeWidth=".4" />
    <circle cx={x} cy={y} r=".9" fill="#fff" />
  </g>;
};

const Chart = ({ d }) => {
  const m = d.map;
  const [xL, xR] = d.frame;
  const yOf = y => y / 2.904 + 130;
  const cs = candles(d.price, ...d.cArgs);
  const smile = m([d.signature + 163, 0])[0];
  return (
    <ChartSvg viewBox={d.vb}>
      <rect x={xL} y="134.500" width={xR - xL} height="475.500" fill="none" stroke="#fff" />
      <rect x={xL} y="613.500" width={xR - xL} height="20.500" fill="none" stroke="#fff" />
      {d.hatch.map(([a, b, ys], i) => ys.map(y => <path key={`${i}-${y}`} d={`M${m([a, y])[0]} ${yOf(y)}H${m([b, y])[0]}`} stroke="#0a5c0a" strokeWidth="3.500" strokeDasharray="1 1" />))}
      {cs.map((c, i) => {
        const x = m([c.x, 0])[0].toFixed(1);
        return <g key={i} stroke={c.col}>
          <path d={`M${x} ${yOf(c.y1).toFixed(1)}V${yOf(c.y2).toFixed(1)}`} strokeWidth="1" />
          <path d={`M${x} ${yOf(c.b1).toFixed(1)}V${yOf(c.b2).toFixed(1)}`} strokeWidth="2" />
        </g>;
      })}
      {d.gold.map(([a, b, ys], i) => ys.map((y, j) => <path key={`${i}-${j}`} d={`M${m([a, y])[0]} ${yOf(y)}H${m([b, y])[0]}`} stroke="#808000" strokeWidth={j === 3 ? 1 : 3} />))}
      {d.bandsThick.map((b, i) => <polyline key={i} points={wobbly(b, m, 1000 + i * 37, 1.2)} fill="none" stroke="#0a5c0a" strokeWidth="3" />)}
      {d.bandsThin.map((b, i) => <polyline key={i} points={wobbly(b, m, 2000 + i * 53, 1)} fill="none" stroke="#0a5c0a" strokeWidth="2" />)}
      <polyline points={wobbly(d.orange, m, 3003, .4)} fill="none" stroke="#ffa500" strokeWidth="2" />
      {d.dotted.map(([a, b, c], i) => { const A = m(a), B = m(b); return <path key={i} d={`M${A[0]} ${A[1]}L${B[0]} ${B[1]}`} stroke={c} strokeDasharray="2 2" fill="none" />; })}
      {d.lines.map((l, i) => <path key={i} d={`M${xL} ${yOf(l.y)}H${xR}`} stroke={l.c} strokeWidth={l.w} strokeDasharray={l.dash} />)}
      {d.markers.map(([x, y, c, c2], i) => <Marker key={i} p={m([x, y])} c={c} c2={c2} />)}
      {d.tiny.map(([t, x, y, c], i) => { const P = m([x, y]); return <TinyT key={i} x={P[0]} y={P[1]} $fill={c}>{t}</TinyT>; })}
      {d.big.map(([t, x, y, c, ls], i) => { const P = m([x, y]); return <BigT key={i} x={P[0]} y={P[1]} $fill={c} $ls={ls}>{t}</BigT>; })}
      <path d={`M${xL + 3} 138h6l-3 5z`} fill="#fff" />
      <SmallT x={xL + 16} y="145">{d.id}</SmallT>
      <path d={`M${m([d.mark, 0])[0] - 4} 135h8l-4 5z`} fill="#999" />
      <SmallT x={m([d.signature, 0])[0]} y="147">Dead_OR_Alive_v1.5</SmallT>
      <circle cx={smile} cy="144" r="5" fill="none" stroke="#fff" strokeWidth=".9" />
      <path d={`M${smile - 2.500} 146.500q2.500-2 5 0M${smile - 2} 142h1M${smile + 1} 142h1`} stroke="#fff" fill="none" strokeWidth=".8" />
      <SideT x={m([d.sideX, 0])[0]} y="189">Hide</SideT>
      <SideT x={m([d.sideX, 0])[0]} y="209">Open</SideT>
      <SmallT x={m([d.note[1], 0])[0]} y={yOf(d.note[2])} $fill="#ddd">{d.note[0]}</SmallT>
      {d.prices.map(([t, y]) => <g key={t}><path d={`M${xR} ${yOf(y)}h3`} stroke="#fff" /><PriceT x={xR + 5} y={yOf(y) + 3.500}>{t}</PriceT></g>)}
      {d.tags.map(([t, y, bg, fg]) => <g key={t}><rect x={xR + 1} y={yOf(y) - 5.500} width="42" height="11" fill={bg} /><PriceT x={xR + 5} y={yOf(y) + 3.500} $fill={fg}>{t}</PriceT></g>)}
      <PriceT x={xR + 5} y="622">2</PriceT>
      <PriceT x={xR + 5} y="631">0.00</PriceT>
      {d.days.map(([t, x]) => <DayT key={t} x={m([x, 0])[0]} y="624" textAnchor="middle">{t}</DayT>)}
      {d.times.map(([t, x]) => { const X = m([x, 0])[0]; return <g key={t}><path d={`M${X} 634v4`} stroke="#fff" /><TimeT x={X} y="647">{t}</TimeT></g>; })}
    </ChartSvg>
  );
};

/* ---------- content ---------- */
const MENU = [['ファイル (F)', 69, -1.6], ['表示 (V)', 60], ['挿入(I)', 52], ['チャート (C)', 70, -1.6], ['ツール (T)', 61, -1.4], ['ウィンドウ (W)', 82, -1.5], ['ヘルプ (H)', 60, -.7]];
const PERIODS = [['M1', 28, 1], ['M5', 28], ['M15', 28], ['M30', 28], ['H1', 27], ['H4', 28], ['D1', 29], ['W1', 29], ['MN', 27]];
const HEAD = [['時間'], ['取引種別'], ['数量'], ['通貨ペア', -.5], ['価格'], ['決済逆指値(S/L)'], ['決済指値(T/P)'], ['価格'], ['手数料'], ['スワップ', -2.8], ['損益']];
const ROWS = [
  ['49311948', '2020.04.24 11:19:01', 'sell', '0.02', 'eurusd', '1.07482', '0.00000', '0.00000', '1.10097', '0', '6', '-5 591'],
  ['49315468', '2020.04.24 11:58:17', 'sell', '0.06', 'eurusd', '1.07576', '0.00000', '0.00000', '1.10097', '0', '13', '-16 169'],
  ['49322182', '2020.04.24 13:19:19', 'sell', '0.12', 'eurusd', '1.07676', '0.00000', '0.00000', '1.10097', '0', '22', '-31 054'],
  ['49323232', '2020.04.24 13:39:51', 'sell', '0.16', 'eurusd', '1.07788', '0.00000', '0.00000', '1.10097', '0', '29', '-39 490'],
  ['49323744', '2020.04.24 13:40:22', 'sell', '0.16', 'eurusd', '1.07889', '0.00000', '0.00000', '1.10097', '0', '29', '-37 763'],
  ['49331358', '2020.04.24 14:17:26', 'sell', '0.16', 'eurusd', '1.07990', '0.00000', '0.00000', '1.10097', '0', '29', '-36 036'],
  ['50009098', '2020.05.01 17:41:26', 'sell', '2.00', 'eurusd', '1.10093', '0.00000', '0.00000', '1.10097', '0', '0', '-855'],
  ['50006413', '2020.05.01 17:30:01', 'buy', '0.02', 'usdjpy', '106.878', '0.000', '0.000', '106.875', '0', '0', '-6'],
];
const BTABS = [['運用比率', 69, .5], ['口座履歴', 68, .4], ['ニュース', 54, -2.7], ['アラーム設定', 78, -1.8], ['メールボックス', 82, -2.6], ['マーケット', 76, -3.2], ['シグナル', 58, -2.2], ['記事', 44], ['ライブラリ', 63, -3.4], ['エキスパート', 72, -3.5], ['操作履歴', 68]];
const STATUS = [['', 1226, 2, 'F1キーでヘルプが表示されます', 1], ['Default', 117, 5], ['', 102], ['', 71], ['', 70], ['', 68], ['', 69], ['', 66]];

const WinButtons = ({ active }) => (
  <WinBtns>
    <WinBtn><svg width="12" height="8"><rect x="1" y="2.500" width="10" height="4" rx="1" fill={active ? '#e8eef5' : '#eef2f6'} stroke="#555" /></svg></WinBtn>
    <WinBtn><svg width="12" height="10"><rect x="2" y="1" width="8" height="8" fill="#eef2f6" stroke="#555" /><rect x="4.500" y="3.500" width="3" height="3" fill="#fff" stroke="#555" strokeWidth=".7" /></svg></WinBtn>
    <WinBtn $close={active}><svg width="13" height="11"><path d="M2 1.500l9 8M11 1.500l-9 8" stroke={active ? '#fff' : '#eef2f6'} strokeWidth="3" /><path d="M2 1.500l9 8M11 1.500l-9 8" stroke={active ? '#fff' : '#6a6a6a'} strokeWidth="1" /></svg></WinBtn>
  </WinBtns>
);

export default function App() {
  return (
    <Page>
      <Global />
      <TitleBar>
        <TitleLeft>{Icons.gemSmall}<span>200189074: GemTrade-Live2 - EURUSD,M1</span></TitleLeft>
        <WinCtrls>
          <WinCtrl><svg width="12" height="12"><path d="M1 6h10" stroke="#222" /></svg></WinCtrl>
          <WinCtrl><svg width="12" height="12"><path d="M3 3V1h8v8H9M1 3h8v8H1z" fill="none" stroke="#222" /></svg></WinCtrl>
          <WinCtrl><svg width="12" height="12"><path d="M1 1l10 10M11 1L1 11" stroke="#222" /></svg></WinCtrl>
        </WinCtrls>
      </TitleBar>
      <ConnBar>
        <ConnGroup $gap={7}><ConnPin>{Icons.pin}</ConnPin>{Icons.lock}{Icons.bars}</ConnGroup>
        <ConnName>SDC1912046659</ConnName>
        <ConnGroup $gap={12}>
          <svg width="11" height="11"><path d="M1 8.500h8" stroke="#fff" strokeWidth="2" /></svg>
          <svg width="11" height="11"><path d="M3 3V1h7v7H8M1 3h7v7H1z" fill="none" stroke="#fff" strokeWidth="1.300" /></svg>
          <svg width="11" height="11"><path d="M1 1l9 9M10 1l-9 9" stroke="#fff" strokeWidth="2" /></svg>
        </ConnGroup>
      </ConnBar>
      <MenuBar>{MENU.map(([t, w, ls]) => <MenuItem key={t} $w={w} $ls={ls}>{t}</MenuItem>)}</MenuBar>
      <ToolRow $h={26}>
        <ToolBox $w={840} $pt={2}>
          <Grip />
          <Slot $w={36}>{Icons.newChart}<Drop /></Slot>
          <Slot $w={36}>{Icons.profile}<Drop /></Slot>
          <Sep $w={6} />
          <Slot $w={28}>{Icons.market}</Slot>
          <Slot $w={27}>{Icons.nav}</Slot>
          <Slot $w={29}>{Icons.fav}</Slot>
          <Slot $w={28} $on>{Icons.term}</Slot>
          <Slot $w={26}>{Icons.strat}</Slot>
          <Sep $w={10} />
          <Slot $w={76} $black>{Icons.order}新規注文</Slot>
          <Slot $w={30}>{Icons.gold}</Slot>
          <Slot $w={28}>{Icons.cloud}</Slot>
          <Slot $w={28}>{Icons.signal}</Slot>
          <Slot $w={81} $on $black>{Icons.auto}自動売買</Slot>
          <Sep $w={4} />
          <Grip />
          <Slot $w={27}>{Icons.ctBar}</Slot>
          <Slot $w={28} $on>{Icons.ctCandle}</Slot>
          <Slot $w={26}>{Icons.ctLine}</Slot>
          <Sep $w={6} />
          <Slot $w={26}>{Icons.zin}</Slot>
          <Slot $w={30}>{Icons.zout}</Slot>
          <Slot $w={26}>{Icons.tile}</Slot>
          <Sep $w={8} />
          <Slot $w={28} $on>{Icons.scroll}</Slot>
          <Slot $w={28} $on>{Icons.shift}</Slot>
          <Sep $w={4} />
          <Slot $w={39}>{Icons.ind}<Drop /></Slot>
          <Slot $w={37}>{Icons.clock}<Drop /></Slot>
          <Slot $w={36}>{Icons.tmpl}<Drop /></Slot>
        </ToolBox>
        <RightTools>{Icons.search}{Icons.chat}</RightTools>
      </ToolRow>
      <ToolRow $h={27}>
        <ToolBox $w={565} $pt={4}>
          <Grip />
          <Slot $w={25} $on>{Icons.cursor}</Slot>
          <Slot $w={29}>{Icons.cross}</Slot>
          <Sep $w={6} />
          <Slot $w={28}>{Icons.vline}</Slot>
          <Slot $w={29}>{Icons.hline}</Slot>
          <Slot $w={28}>{Icons.trend}</Slot>
          <Slot $w={28}>{Icons.chan}</Slot>
          <Slot $w={28}>{Icons.fib}</Slot>
          <Slot $w={27}>A</Slot>
          <Slot $w={28}>{Icons.txtbox}</Slot>
          <Slot $w={37}>{Icons.arrows}<Drop /></Slot>
          <Sep $w={9} />
          {PERIODS.map(([t, w, on]) => <Slot key={t} $w={w} $on={on}>{t}</Slot>)}
        </ToolBox>
      </ToolRow>
      <Mdi>
        <Win>
          <WinHead>
            <WinName>{Icons.winTabDim}USDJPY,M1</WinName>
            <WinButtons />
          </WinHead>
          <BlackArea><Chart d={leftChart} /></BlackArea>
        </Win>
        <Win $active>
          <WinHead $active>
            <WinName>{Icons.winTab}EURUSD,M1</WinName>
            <WinButtons active />
          </WinHead>
          <BlackArea><Chart d={rightChart} /></BlackArea>
        </Win>
      </Mdi>
      <ChartTabs>
        <TabGroup>
          <ChartTab $w={89}>USDJPY,M1</ChartTab>
          <ChartTab $w={84} $on>EURUSD,M1</ChartTab>
        </TabGroup>
        <Arrows><span>◀</span><span>▶</span></Arrows>
      </ChartTabs>
      <Terminal>
        <Strip>
          <StripClose>×</StripClose>
          <StripBody><StripText>ターミナル</StripText></StripBody>
        </Strip>
        <TermBody>
          <HeadRow>
            <HeadCell $left>注文番号</HeadCell>
            {HEAD.map(([h, ls], i) => <HeadCell key={i} $ls={ls}>{h}{i === 3 && <span>/</span>}</HeadCell>)}
          </HeadRow>
          {ROWS.map((r, i) => (
            <Row key={r[0]} $alt={i % 2}>
              <IdCell>{Icons.doc(r[2] === 'buy' ? '#2f8fe0' : '#e8401c')}{r[0]}</IdCell>
              {r.slice(1, 11).map((c, j) => <Cell key={j}>{c}</Cell>)}
              <ProfitCell>{r[11]}<CloseX>x</CloseX></ProfitCell>
            </Row>
          ))}
          <TotalRow>
            <TotalLeft>{Icons.sumDoc}<span>残高: 198 818 JPY&nbsp; 有効証拠金: 31 982&nbsp; 必要証拠金: 31 628&nbsp; 余剰証拠金: 354&nbsp; 証拠金維持率: 101.12%</span></TotalLeft>
            <span>-166 836</span>
          </TotalRow>
          <Filler />
          <BottomTabs>
            <BottomTab $w={44} $on>取引</BottomTab>
            {BTABS.map(([t, w, ls]) => <BottomTab key={t} $w={w} $ls={ls}>{t}{t === 'マーケット' && <Market>111</Market>}</BottomTab>)}
          </BottomTabs>
        </TermBody>
      </Terminal>
      <Gutter />
      <Status>
        {STATUS.map(([t, w, pl, long, first], i) => <StatusCell key={i} $w={w} $pl={pl} $first={first}>{long || t}</StatusCell>)}
        <StatusCell $w={129} $pl={5}>{Icons.meter}13195/209 kb</StatusCell>
      </Status>
      <Taskbar>
        <TaskLeft>
          <TaskSlot $w={47}>{Icons.start}</TaskSlot>
          <TaskSlot>{Icons.lens}</TaskSlot>
          <TaskSlot>{Icons.taskv}</TaskSlot>
          <TaskSlot $w={50}><FaInternetExplorer size={27} color="#1f8fe0" /></TaskSlot>
          <TaskSlot $w={50}>{Icons.folder}</TaskSlot>
          <TaskSlot $open>{Icons.mt}</TaskSlot>
          <TaskSlot $w={48} $active $open>{Icons.mt}</TaskSlot>
          <TaskSlot $open>{Icons.gem}</TaskSlot>
        </TaskLeft>
        <Tray>
          <TrayIcon $w={22}>{Icons.net}</TrayIcon>
          <TrayIcon $w={24}>{Icons.vol}</TrayIcon>
          <TrayIcon $w={22} $fs={18}>A</TrayIcon>
          <Clock>23:48<br />2020/05/01</Clock>
          <Notif>{Icons.notify}<NotifBadge>1</NotifBadge></Notif>
        </Tray>
      </Taskbar>
    </Page>
  );
}
